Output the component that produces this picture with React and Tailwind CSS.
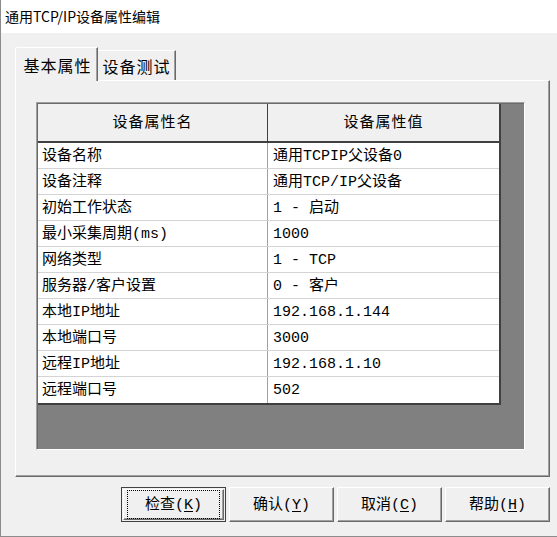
const rows = [
  ["设备名称", "通用TCPIP父设备0"],
  ["设备注释", "通用TCP/IP父设备"],
  ["初始工作状态", "1 - 启动"],
  ["最小采集周期(ms)", "1000"],
  ["网络类型", "1 - TCP"],
  ["服务器/客户设置", "0 - 客户"],
  ["本地IP地址", "192.168.1.144"],
  ["本地端口号", "3000"],
  ["远程IP地址", "192.168.1.10"],
  ["远程端口号", "502"],
];

const buttons = [
  { label: "检查", key: "K", primary: true },
  { label: "确认", key: "Y" },
  { label: "取消", key: "C" },
  { label: "帮助", key: "H" },
];

const cellFont = { fontFamily: '"Liberation Mono", "Noto Sans CJK SC", monospace' };

function Button({ label, hotkey, primary }) {
  return (
    <button
      className={
        "w-[105px] h-[35px] bg-[#f0f0f0] text-[15px] text-black flex items-center justify-center " +
        (primary ? "border border-[#404040] p-[1px]" : "")
      }
      style={cellFont}
    >
      <span className="w-full h-full flex items-center justify-center border-t border-l border-white border-r border-b border-r-[#696969] border-b-[#696969] shadow-[inset_-1px_-1px_0_#a0a0a0]">
        <span
          className={
            "w-full h-full flex items-center justify-center pt-[3px] " +
            (primary ? "m-[3px] outline outline-1 outline-dotted outline-black -outline-offset-1" : "")
          }
        >
          {label}(<span className="underline underline-offset-2">{hotkey}</span>)
        </span>
      </span>
    </button>
  );
}

export default function App() {
  return (
    <div className="w-[557px] h-[537px] flex flex-col bg-[#f0f0f0] border-l border-b border-[#8c8c8c] overflow-hidden">
      <div
        className="h-[33px] bg-white flex items-center pl-[4px] text-[14px] text-black shrink-0"
        style={{ fontFamily: '"Noto Sans CJK SC", sans-serif' }}
      >
        通用TCP/IP设备属性编辑
      </div>

      <div className="flex-1 flex flex-col pt-[14px] pl-[14px] pr-[7px]">
        {/* tab strip */}
        <div className="flex items-end h-[33px] relative z-10" style={{ fontFamily: '"Noto Sans CJK SC", sans-serif' }}>
          <div className="w-[83px] h-[34px] -mb-[1px] bg-[#f0f0f0] border-t border-l border-white border-r border-r-[#696969] shadow-[inset_-1px_0_0_#a0a0a0] rounded-tl-[2px] flex items-center justify-center pl-[2px] text-[16px] tracking-[1px] text-black">
            基本属性
          </div>
          <div className="w-[78px] h-[30px] bg-[#f0f0f0] border-t border-white border-r border-r-[#696969] shadow-[inset_-1px_0_0_#a0a0a0] flex items-center justify-center text-[16px] tracking-[1px] text-black">
            设备测试
          </div>
        </div>

        {/* tab page */}
        <div className="h-[397px] border-t border-l border-white border-r border-b border-r-[#696969] border-b-[#696969] shadow-[inset_-1px_-1px_0_#a0a0a0] pl-[20px] pt-[21px]">
          <div className="w-[489px] h-[348px] border-t border-l border-[#a0a0a0] border-r border-b border-r-white border-b-white">
            <div className="w-full h-full bg-[#808080] border-t border-l border-[#696969]">
              <div className="w-[463px] border-r-2 border-b-2 border-[#404040] bg-white" style={cellFont}>
                <div className="flex h-[39px] bg-[#f0f0f0] border-b-2 border-[#404040] text-[15px] tracking-[1px] text-black">
                  <div className="w-[230px] flex items-center justify-center pt-[4px] border-r border-[#404040]">设备属性名</div>
                  <div className="flex-1 flex items-center justify-center pt-[4px]">设备属性值</div>
                </div>
                {rows.map(([name, value], i) => (
                  <div
                    key={name}
                    className={
                      "flex h-[26px] text-[15px] text-black " + (i < rows.length - 1 ? "border-b border-[#d4d4d4]" : "")
                    }
                  >
                    <div className="w-[230px] flex items-center pl-[4px] pt-[3px] border-r border-[#a0a0a0] whitespace-pre">{name}</div>
                    <div className="flex-1 flex items-center pl-[5px] pt-[3px] whitespace-pre">{value}</div>
                  </div>
                ))}
              </div>
            </div>
          </div>
        </div>

        {/* dialog buttons */}
        <div className="flex justify-end gap-[3px] mt-[10px]">
          {buttons.map((b) => (
            <Button key={b.key} label={b.label} hotkey={b.key} primary={b.primary} />
          ))}
        </div>
      </div>
    </div>
  );
}
